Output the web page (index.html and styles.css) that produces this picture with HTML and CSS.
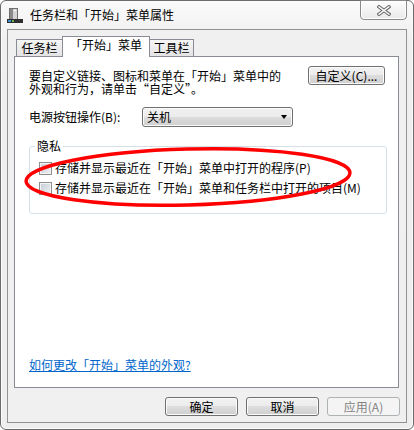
FILE: index.html
```html
<!DOCTYPE html>
<html lang="zh-CN">
<head>
    <meta charset="UTF-8">
    <meta name="viewport" content="width=device-width, initial-scale=1.0">
    <title>任务栏和「开始」菜单属性</title>
    <link rel="stylesheet" href="styles.css">
</head>
<body>
    <div class="window">
        <!-- 标题栏 -->
        <div class="titlebar">
            <svg class="app-icon" width="16" height="15" viewBox="0 0 16 15">
                <rect x="2.5" y="0.5" width="8" height="11" fill="#d4d4d4" stroke="#707070"/>
                <rect x="3" y="1" width="3" height="10" fill="#8a8a8a"/>
                <rect x="7" y="2" width="2" height="1" fill="#ffffff"/>
                <rect x="0" y="11" width="16" height="4" fill="#2e2e2e"/>
                <rect x="1" y="12" width="3" height="2" fill="#3b8fd6"/>
                <rect x="5" y="12" width="2" height="2" fill="#6bb04c"/>
            </svg>
            <span class="title">任务栏和「开始」菜单属性</span>
            <div class="close-btn">
                <svg width="14" height="11" viewBox="0 0 14 11">
                    <path d="M2 1.8 L12 9.2 M12 1.8 L2 9.2" stroke="#666" stroke-width="3.4" stroke-linecap="square"/>
                    <path d="M2 1.8 L12 9.2 M12 1.8 L2 9.2" stroke="#fff" stroke-width="1.4" stroke-linecap="square"/>
                </svg>
            </div>
        </div>

        <div class="client">
            <div class="tabs">
                <div class="tab tab-first">任务栏</div>
                <div class="tab tab-active">「开始」菜单</div>
                <div class="tab tab-last">工具栏</div>
            </div>

            <div class="panel">
                <div class="intro-row">
                    <p class="intro">要自定义链接、图标和菜单在「开始」菜单中的<br>外观和行为，请单击“自定义”。</p>
                    <button class="btn btn-custom">自定义(C)...</button>
                </div>

                <div class="power-row">
                    <span class="power-label">电源按钮操作(B):</span>
                    <div class="combo">关机<span class="arrow"></span></div>
                </div>

                <fieldset class="group">
                    <legend>隐私</legend>
                    <label class="check"><span class="box"></span>存储并显示最近在「开始」菜单中打开的程序(P)</label>
                    <label class="check"><span class="box"></span>存储并显示最近在「开始」菜单和任务栏中打开的项目(M)</label>
                </fieldset>

                <a class="help-link" href="#">如何更改「开始」菜单的外观?</a>
            </div>

            <div class="buttons">
                <button class="btn">确定</button>
                <button class="btn">取消</button>
                <button class="btn btn-disabled">应用(A)</button>
            </div>
        </div>

        <!-- 红色圈注 -->
        <svg class="annotation" width="414" height="430" viewBox="0 0 414 430">
            <ellipse cx="188" cy="177" rx="162" ry="28" transform="rotate(-1.5 188 177)" fill="none" stroke="#f00" stroke-width="3.5"/>
        </svg>
    </div>
</body>
</html>
```

FILE: styles.css
```css
* {
    box-sizing: border-box;
}

body {
    margin: 0;
    width: 414px;
    height: 430px;
    overflow: hidden;
    font: 12px/12px "Noto Sans CJK SC", "Noto Sans", sans-serif;
    color: #000;
    background: #fff;
}

/* 窗口外框 */
.window {
    position: relative;
    display: flex;
    flex-direction: column;
    width: 414px;
    height: 430px;
    border: 1px solid #6b6b6b;
    border-radius: 6px;
    background: linear-gradient(#fafafa, #efefef 40px, #eeeeee);
    box-shadow: inset 0 0 0 1px #fbfbfb;
}

.titlebar {
    display: flex;
    align-items: flex-start;
    height: 28px;
    padding-left: 6px;
}

.app-icon {
    flex: none;
    margin-top: 7px;
}

.title {
    flex: 1;
    margin: 8px 0 0 7px;
}

.close-btn {
    display: flex;
    align-items: center;
    justify-content: center;
    width: 47px;
    height: 20px;
    margin: -1px 6px 0 0;
    border: 1px solid #8a8a8a;
    border-radius: 0 0 4px 4px;
    background: linear-gradient(#fdfdfd, #eaeaea);
    box-shadow: inset 0 0 0 1px #fff;
}

/* 客户区 */
.client {
    flex: 1;
    display: flex;
    flex-direction: column;
    margin: 0 6px 6px;
    padding: 6px 7px 6px 6px;
    border: 1px solid #929292;
    background: #f0f0f0;
}

.tabs {
    display: flex;
    align-items: flex-end;
    height: 20px;
    padding-left: 2px;
}

.tab {
    height: 17px;
    padding-top: 2px;
    text-align: center;
    border: 1px solid #898c95;
    border-bottom: none;
    background: linear-gradient(#f5f5f5, #e4e4e4);
}

.tab-first {
    width: 47px;
}

.tab-last {
    width: 45px;
}

.tab-active {
    position: relative;
    z-index: 1;
    width: 88px;
    height: 21px;
    margin: 0 -1px -1px;
    background: #fff;
}

.panel {
    flex: 1;
    display: flex;
    flex-direction: column;
    padding: 9px 11px 15px 14px;
    border: 1px solid #898c95;
    background: #fff;
}

.intro-row {
    display: flex;
    justify-content: space-between;
    align-items: flex-start;
}

.intro {
    margin: 3px 0 0;
    line-height: 13px;
}

.btn {
    width: 73px;
    height: 19px;
    padding: 0;
    font: inherit;
    color: #000;
    border: 1px solid #707070;
    border-radius: 3px;
    background: linear-gradient(#f2f2f2, #ebebeb 50%, #dddddd 50%, #cfcfcf);
    box-shadow: inset 0 0 0 1px #fbfbfb;
}

.btn-custom {
    width: 77px;
    margin-right: 2px;
}

.btn-disabled {
    color: #838383;
    border-color: #adb2b5;
    background: #f4f4f4;
    box-shadow: none;
}

.power-row {
    display: flex;
    align-items: center;
    margin-top: 12px;
}

.power-label {
    width: 113px;
}

.combo {
    display: flex;
    align-items: center;
    justify-content: space-between;
    width: 151px;
    height: 20px;
    padding: 0 5px 0 4px;
    border: 1px solid #707070;
    border-radius: 3px;
    background: linear-gradient(#f2f2f2, #ebebeb 50%, #dddddd 50%, #cfcfcf);
    box-shadow: inset 0 0 0 1px #fbfbfb;
}

.arrow {
    width: 0;
    height: 0;
    border-left: 3.5px solid transparent;
    border-right: 3.5px solid transparent;
    border-top: 4px solid #000;
}

/* 隐私 分组框 */
.group {
    min-width: 0;
    margin: 13px 0 0;
    padding: 6px 9px 15px;
    border: 1px solid #d5dfe5;
    border-radius: 3px;
}

.group legend {
    margin-left: -4px;
    padding: 0 2px;
    line-height: 12px;
}

.check {
    display: flex;
    align-items: center;
    height: 20px;
    white-space: nowrap;
}

.box {
    flex: none;
    width: 13px;
    height: 13px;
    margin-right: 3px;
    border: 1px solid #8e8f8f;
    background: linear-gradient(135deg, #c6cdd6, #eef1f4);
    box-shadow: inset 0 0 0 1px #f4f4f4;
}

.help-link {
    align-self: flex-start;
    margin-top: auto;
    line-height: 14px;
    color: #0066cc;
    text-decoration: underline;
}

.buttons {
    display: flex;
    justify-content: flex-end;
    gap: 8px;
    margin: 9px -1px 0 0;
}

.annotation {
    position: absolute;
    top: -1px;
    left: -1px;
    pointer-events: none;
}
```
